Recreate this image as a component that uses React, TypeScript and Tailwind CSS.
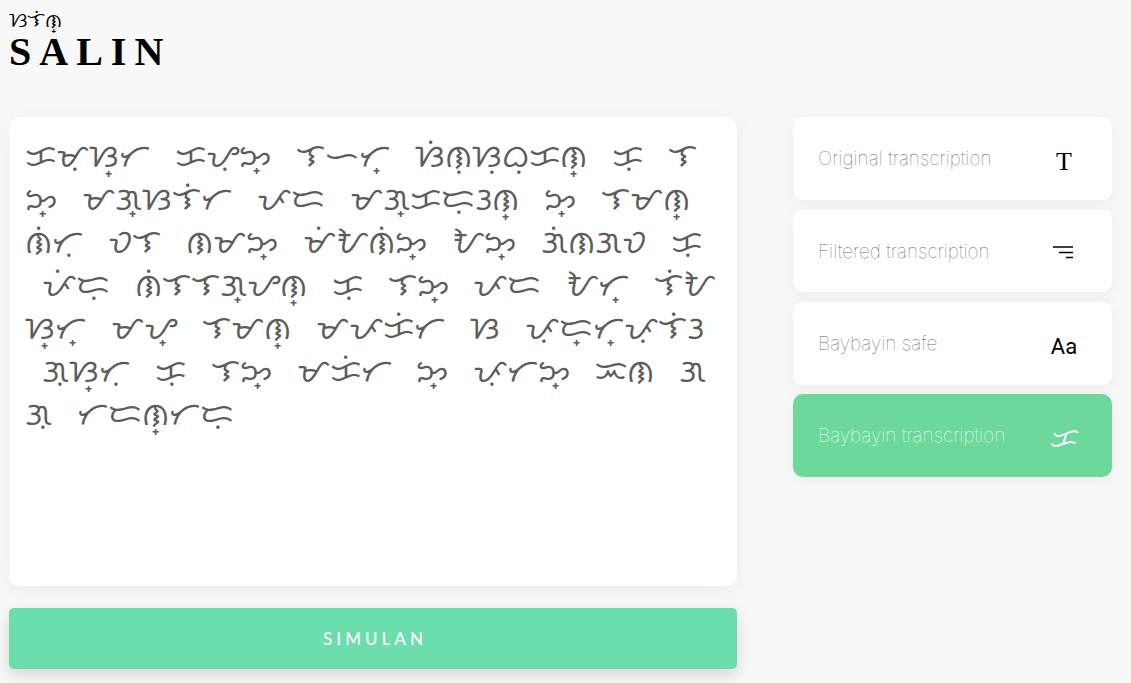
import { useState } from "react";
import type { ReactNode } from "react";

const words = [
  "ᜃᜋᜓᜐ᜔ᜆ", "ᜃᜌᜓᜅ᜔", "ᜎᜑᜆ᜔", "ᜐᜒᜈᜓᜐᜓᜊᜓᜃᜈ᜔", "ᜃᜓ", "ᜎᜅ᜔", "ᜋᜄ᜔ᜐᜎᜒᜆ", "ᜉᜇ", "ᜋᜄ᜔ᜃᜇᜓᜂᜈ᜔", "ᜅ᜔", "ᜎᜋᜈ᜔",
  "ᜈᜒᜆᜓ", "ᜏᜎ", "ᜈᜋᜅ᜔", "ᜋᜒᜀᜈᜒᜅ᜔", "ᜀᜅ᜔", "ᜄᜒᜈᜄᜏ", "ᜃᜓ", "ᜉᜒᜇᜓ", "ᜈᜒᜎᜎᜄ᜔ᜌᜈ᜔", "ᜃᜓ", "ᜎᜅ᜔", "ᜉᜇ", "ᜀᜆ᜔",
  "ᜎᜒᜀᜐ᜔ᜆ᜔", "ᜋᜌ᜔", "ᜎᜋᜈ᜔", "ᜋᜉᜃᜒᜆ", "ᜐ", "ᜉᜓᜇ᜔ᜆ᜔ᜉᜓᜎᜒᜂ", "ᜄᜓᜐ᜔ᜆᜓ", "ᜃᜓ", "ᜎᜅ᜔", "ᜋᜃᜒᜆ", "ᜅ᜔", "ᜉᜓᜆᜅ᜔",
  "ᜁᜈ", "ᜄᜄᜓ", "ᜆᜇᜈ᜔ᜆᜇᜓ",
];

function FilterIcon() {
  return (
    <svg width="24" height="16" viewBox="0 0 24 16" fill="none" stroke="currentColor" strokeWidth="1.6" aria-hidden="true">
      <path d="M1 1H21M7 6.5H21M14 11.5H21" />
    </svg>
  );
}

function KaIcon() {
  return (
    <svg width="30" height="20" viewBox="0 0 30 20" fill="none" stroke="currentColor" strokeWidth="2" strokeLinecap="round" strokeLinejoin="round" aria-hidden="true">
      <g transform="translate(1.5 1)">
        <path d="M4.3 4.8C5 7 7.5 7.3 10 6.7C14 5.8 17.5 3.4 21.5 2.6C24 2.1 26 2.4 27 3.4" />
        <path d="M15.6 5.2L13 14.6" />
        <path d="M1.6 15.2C2.6 17.2 5 17.4 7.5 16.7C11 15.7 14.5 13.8 18.5 13.2C21 12.8 23 13 24.2 14" />
      </g>
    </svg>
  );
}

const modes: { id: string; label: string; icon: ReactNode }[] = [
  { id: "original", label: "Original transcription", icon: <span className="font-['Liberation_Serif',serif] text-[26px] leading-6">T</span> },
  { id: "filtered", label: "Filtered transcription", icon: <FilterIcon /> },
  { id: "safe", label: "Baybayin safe", icon: <span className="font-['Roboto',sans-serif] text-[22px]">Aa</span> },
  { id: "baybayin", label: "Baybayin transcription", icon: <KaIcon /> },
];

export default function App() {
  const [mode, setMode] = useState("baybayin");
  const [text, setText] = useState(words.join("   "));
  return (
    <div className="min-h-screen bg-[#f8f8f8] pt-2 pr-[19px] pb-3.5 pl-[9px] text-black">
      <header className="pb-[45px]">
        <p className="font-['Noto_Sans',sans-serif] text-xl leading-6">ᜐᜎᜒᜈ᜔</p>
        <h1 className="font-['Liberation_Serif',serif] text-[40px] leading-10 font-bold tracking-[8px]">SALIN</h1>
      </header>
      <div className="flex items-start gap-14">
        <main className="flex min-w-0 flex-1 flex-col gap-[22px]">
          <textarea
            aria-label="Baybayin"
            spellCheck={false}
            value={text}
            onChange={(e) => setText(e.target.value)}
            className="block h-[469px] w-full resize-none rounded-[10px] bg-white py-4 pr-[21px] pl-4 font-['Noto_Sans',sans-serif] text-[32px] leading-[43px] break-all whitespace-break-spaces text-[#5c5c5c] shadow-[0_4px_20px_rgba(0,0,0,0.06)] outline-none"
          />
          <button type="button" className="h-[61px] rounded-[5px] bg-[#6cddad] pl-1 font-['Lato',sans-serif] text-[17px] font-medium tracking-[4px] text-white shadow-[0_6px_16px_rgba(0,0,0,0.14)]">
            SIMULAN
          </button>
        </main>
        <aside className="flex min-h-[360px] w-[319px] shrink-0 flex-col justify-between">
          {modes.map((m) => (
            <button
              key={m.id}
              type="button"
              aria-pressed={m.id === mode}
              onClick={() => setMode(m.id)}
              className={`flex h-[83px] items-center justify-between rounded-[10px] pt-0.5 pr-6 pl-[25px] text-left shadow-[0_4px_16px_rgba(0,0,0,0.05)] ${m.id === mode ? "bg-[#6cd99b] text-white" : "bg-white text-black"}`}
            >
              <span className={`font-['Inter',sans-serif] text-[19px] font-thin ${m.id === mode ? "text-white" : "text-[#666]"}`}>{m.label}</span>
              <span className="flex w-12 items-center justify-center pt-1">{m.icon}</span>
            </button>
          ))}
        </aside>
      </div>
    </div>
  );
}
